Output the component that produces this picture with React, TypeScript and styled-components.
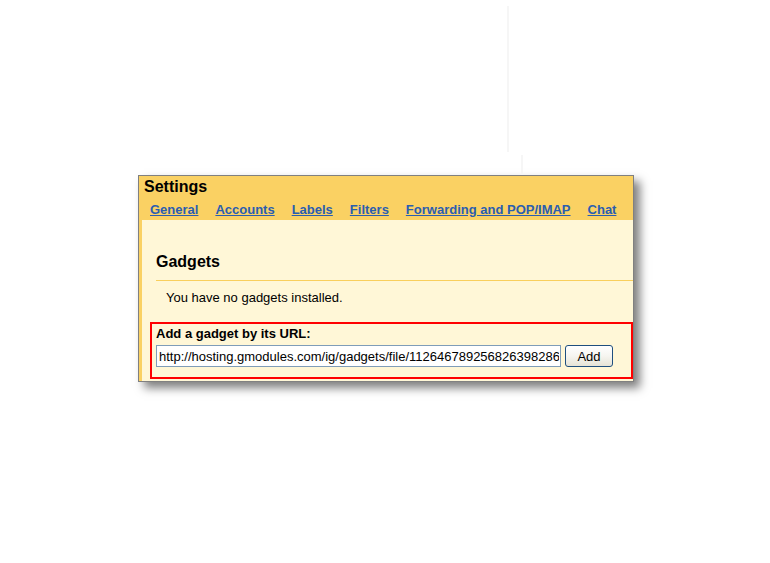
import React from "react";
import styled, { createGlobalStyle } from "styled-components";

const GlobalStyle = createGlobalStyle`
  html, body {
    margin: 0;
    padding: 0;
    background: #ffffff;
  }
  body {
    font-family: "Liberation Sans", Arial, sans-serif;
    color: #000;
  }
`;

const Stage = styled.div`
  position: relative;
  width: 770px;
  height: 563px;
  padding: 175px 0 0 138px;
  box-sizing: border-box;
`;

const FaintLine = styled.div<{ $x: number; $top: number; $h: number }>`
  position: absolute;
  left: ${(p) => p.$x}px;
  top: ${(p) => p.$top}px;
  width: 2px;
  height: ${(p) => p.$h}px;
  background: #f6f6f6;
`;

const Panel = styled.div`
  width: 496px;
  box-sizing: border-box;
  border: 1px solid #808080;
  background: #fad163;
  box-shadow: 6px 6px 9px rgba(0, 0, 0, 0.5);
  display: flex;
  flex-direction: column;
`;

const Header = styled.div`
  height: 44px;
  box-sizing: border-box;
  padding: 2px 0 2px 0;
  display: flex;
  flex-direction: column;
  gap: 6px;
`;

const Title = styled.div`
  font-size: 16px;
  font-weight: bold;
  line-height: 18px;
  padding-left: 5px;
`;

const Tabs = styled.div`
  display: flex;
  gap: 17px;
  padding-left: 11px;
`;

const TabLink = styled.a`
  font-size: 13px;
  font-weight: bold;
  line-height: 16px;
  color: #2a5db0;
  text-decoration: underline;
  white-space: nowrap;
  cursor: pointer;
`;

const Content = styled.div`
  margin-left: 3px;
  background: #fff7d7;
  padding: 32px 0 2px 0;
  display: flex;
  flex-direction: column;
`;

const Section = styled.div`
  padding-left: 14px;
  display: flex;
  flex-direction: column;
`;

const Heading = styled.div`
  font-size: 16px;
  font-weight: bold;
  line-height: 20px;
`;

const Rule = styled.div`
  height: 1px;
  margin-top: 8px;
  background: #f9cf5c;
`;

const Message = styled.div`
  font-size: 13px;
  line-height: 15px;
  margin-top: 9px;
  padding-left: 10px;
`;

const UrlBox = styled.div`
  margin: 17px 0 0 8px;
  border: 2px solid #ff0000;
  padding: 2px 0 10px 4px;
  display: flex;
  flex-direction: column;
  gap: 3px;
`;

const UrlLabel = styled.div`
  font-size: 13px;
  font-weight: bold;
  line-height: 16px;
`;

const UrlRow = styled.div`
  display: flex;
  align-items: center;
  gap: 4px;
`;

const UrlInput = styled.input`
  width: 405px;
  height: 22px;
  box-sizing: border-box;
  border: 1px solid #7f9db9;
  background: #fff;
  padding: 0 1px 0 2px;
  margin: 0;
  font-family: "Liberation Sans", Arial, sans-serif;
  font-size: 13px;
  color: #000;
  outline: none;
`;

const AddButton = styled.button`
  width: 48px;
  height: 22px;
  box-sizing: border-box;
  margin: 0;
  padding: 0;
  border: 1px solid #1f4f7f;
  border-radius: 3px;
  background: linear-gradient(#ffffff 0%, #f6f5f0 50%, #e6e3d6 100%);
  font-family: "Liberation Sans", Arial, sans-serif;
  font-size: 13px;
  color: #000;
  cursor: pointer;
`;

const tabs = ["General", "Accounts", "Labels", "Filters", "Forwarding and POP/IMAP", "Chat"];

export default function App() {
  return (
    <>
      <GlobalStyle />
      <Stage>
        <FaintLine $x={507} $top={6} $h={146} />
        <FaintLine $x={521} $top={155} $h={20} />
        <Panel>
          <Header>
            <Title>Settings</Title>
            <Tabs>
              {tabs.map((t) => (
                <TabLink key={t}>{t}</TabLink>
              ))}
            </Tabs>
          </Header>
          <Content>
            <Section>
              <Heading>Gadgets</Heading>
              <Rule />
              <Message>You have no gadgets installed.</Message>
            </Section>
            <UrlBox>
              <UrlLabel>Add a gadget by its URL:</UrlLabel>
              <UrlRow>
                <UrlInput
                  type="text"
                  defaultValue="http://hosting.gmodules.com/ig/gadgets/file/112646789256826398286"
                />
                <AddButton>Add</AddButton>
              </UrlRow>
            </UrlBox>
          </Content>
        </Panel>
      </Stage>
    </>
  );
}
